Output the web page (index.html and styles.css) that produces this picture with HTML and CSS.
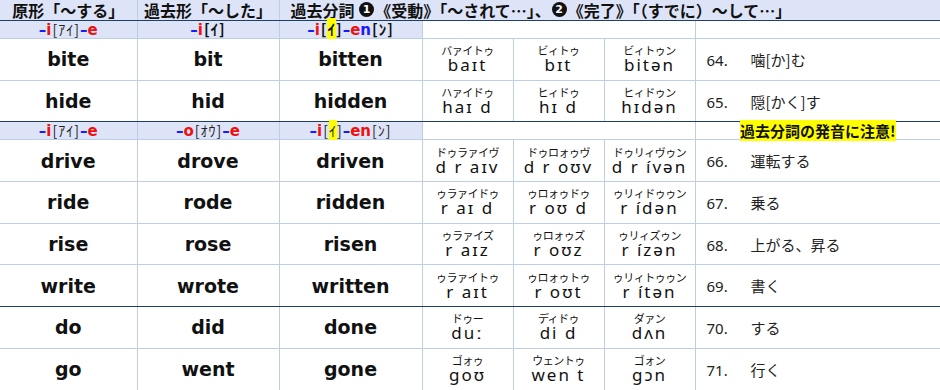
FILE: index.html
```html
<!DOCTYPE html>
<html lang="ja">
<head>
    <meta charset="UTF-8">
    <title>不規則動詞 i-e 型</title>
    <link rel="stylesheet" href="styles.css">
</head>
<body>
    <table class="verbs">
        <colgroup>
            <col class="c-word"><col class="c-word2"><col class="c-word3">
            <col class="c-pron"><col class="c-pron"><col class="c-pron">
            <col class="c-mean">
        </colgroup>
        <tr class="head">
            <td class="center">原形「〜する」</td>
            <td class="center">過去形「〜した」</td>
            <td colspan="5" class="head-long">過去分詞 <span class="circ">1</span>《受動》「〜されて…」、<span class="circ">2</span>《完了》「（すでに）〜して…」</td>
        </tr>
        <tr class="sub">
            <td><span class="bl">–</span><span class="rd">i</span><span class="kk">[ｱｲ]</span><span class="bl">–</span><span class="rd">e</span></td>
            <td><span class="bl">–</span><span class="rd">i</span><span class="kb">[ｲ]</span></td>
            <td><span class="bl">–</span><span class="rd">i</span><span class="kb">[<span class="hl">ｲ</span>]</span><span class="bl">–</span><span class="rd">e</span><span class="bl">n</span><span class="kb">[ﾝ]</span></td>
            <td colspan="3" class="blank"></td>
            <td class="blank"></td>
        </tr>
        <tr class="row">
            <td class="word">bite</td><td class="word">bit</td><td class="word">bitten</td>
            <td class="pron"><div class="kana">バァイトゥ</div><div class="ipa">baɪt</div></td>
            <td class="pron"><div class="kana">ビィトゥ</div><div class="ipa">bɪt</div></td>
            <td class="pron"><div class="kana">ビィトゥン</div><div class="ipa">bitən</div></td>
            <td class="mean"><span class="num">64.</span>噛[か]む</td>
        </tr>
        <tr class="row last">
            <td class="word">hide</td><td class="word">hid</td><td class="word">hidden</td>
            <td class="pron"><div class="kana">ハァイドゥ</div><div class="ipa">haɪ d</div></td>
            <td class="pron"><div class="kana">ヒィドゥ</div><div class="ipa">hɪ d</div></td>
            <td class="pron"><div class="kana">ヒィドゥン</div><div class="ipa">hɪdən</div></td>
            <td class="mean"><span class="num">65.</span>隠[かく]す</td>
        </tr>
        <tr class="sub">
            <td><span class="bl">–</span><span class="rd">i</span><span class="kk">[ｱｲ]</span><span class="bl">–</span><span class="rd">e</span></td>
            <td><span class="bl">–</span><span class="rd">o</span><span class="kk">[ｵｳ]</span><span class="bl">–</span><span class="rd">e</span></td>
            <td><span class="bl">–</span><span class="rd">i</span><span class="kk">[<span class="hl">ｲ</span>]</span><span class="bl">–</span><span class="rd">en</span><span class="kk">[ﾝ]</span></td>
            <td colspan="3" class="blank"></td>
            <td class="note"><span class="hl">過去分詞の発音に注意!</span></td>
        </tr>
        <tr class="row">
            <td class="word">drive</td><td class="word">drove</td><td class="word">driven</td>
            <td class="pron"><div class="kana">ドゥラァイヴ</div><div class="ipa">d r aɪv</div></td>
            <td class="pron"><div class="kana">ドゥロォゥヴ</div><div class="ipa">d r oʊv</div></td>
            <td class="pron"><div class="kana">ドゥリィヴゥン</div><div class="ipa">d r ívən</div></td>
            <td class="mean"><span class="num">66.</span>運転する</td>
        </tr>
        <tr class="row">
            <td class="word">ride</td><td class="word">rode</td><td class="word">ridden</td>
            <td class="pron"><div class="kana">ゥラァイドゥ</div><div class="ipa">r aɪ d</div></td>
            <td class="pron"><div class="kana">ゥロォゥドゥ</div><div class="ipa">r oʊ d</div></td>
            <td class="pron"><div class="kana">ゥリィドゥゥン</div><div class="ipa">r ídən</div></td>
            <td class="mean"><span class="num">67.</span>乗る</td>
        </tr>
        <tr class="row">
            <td class="word">rise</td><td class="word">rose</td><td class="word">risen</td>
            <td class="pron"><div class="kana">ゥラァイズ</div><div class="ipa">r aɪz</div></td>
            <td class="pron"><div class="kana">ゥロォゥズ</div><div class="ipa">r oʊz</div></td>
            <td class="pron"><div class="kana">ゥリィズゥン</div><div class="ipa">r ízən</div></td>
            <td class="mean"><span class="num">68.</span>上がる、昇る</td>
        </tr>
        <tr class="row last">
            <td class="word">write</td><td class="word">wrote</td><td class="word">written</td>
            <td class="pron"><div class="kana">ゥラァイトゥ</div><div class="ipa">r aɪt</div></td>
            <td class="pron"><div class="kana">ゥロォゥトゥ</div><div class="ipa">r oʊt</div></td>
            <td class="pron"><div class="kana">ゥリィトゥゥン</div><div class="ipa">r ítən</div></td>
            <td class="mean"><span class="num">69.</span>書く</td>
        </tr>
        <tr class="row">
            <td class="word">do</td><td class="word">did</td><td class="word">done</td>
            <td class="pron"><div class="kana">ドゥー</div><div class="ipa">duː</div></td>
            <td class="pron"><div class="kana">ディドゥ</div><div class="ipa">di d</div></td>
            <td class="pron"><div class="kana">ダァン</div><div class="ipa">dʌn</div></td>
            <td class="mean"><span class="num">70.</span>する</td>
        </tr>
        <tr class="row last">
            <td class="word">go</td><td class="word">went</td><td class="word">gone</td>
            <td class="pron"><div class="kana">ゴォゥ</div><div class="ipa">goʊ</div></td>
            <td class="pron"><div class="kana">ウェントゥ</div><div class="ipa">wen t</div></td>
            <td class="pron"><div class="kana">ゴォン</div><div class="ipa">gɔn</div></td>
            <td class="mean"><span class="num">71.</span>行く</td>
        </tr>
    </table>
</body>
</html>
```

FILE: styles.css
```css
body {
    margin: 0;
    background: #fff;
    font-family: "Noto Sans CJK JP", sans-serif;
    color: #111;
}
.verbs {
    width: 940px;
    border-collapse: collapse;
    table-layout: fixed;
}
.c-word { width: 137px; }
.c-word2 { width: 142px; }
.c-word3 { width: 143px; }
.c-pron { width: 91px; }
.c-mean { width: 245px; }
.verbs td {
    padding: 0;
    border: 1px solid #bccfe6;
    white-space: nowrap;
}
.verbs td:first-child {
    border-left: none;
}
.verbs td:last-child {
    border-right: none;
}
.head td {
    height: 20px;
    background: #dde4f7;
    font-weight: 700;
    font-size: 16px;
    line-height: 20px;
    border-top: none;
    border-bottom: 1px solid #1f3f66;
}
.center {
    text-align: center;
}
.head-long {
    padding-left: 11px !important;
}
.circ {
    display: inline-block;
    width: 15px;
    height: 15px;
    margin: 2px 1px 0;
    border-radius: 50%;
    background: #111;
    color: #fff;
    font-family: "DejaVu Sans", sans-serif;
    font-size: 11px;
    font-weight: 700;
    line-height: 15px;
    text-align: center;
    vertical-align: top;
}
.sub td {
    height: 16px;
    background: #dde4f7;
    text-align: center;
    font-weight: 700;
    font-size: 15px;
    line-height: 16px;
    font-family: "DejaVu Sans", "Noto Sans CJK JP", sans-serif;
}
.sub td.blank, .sub td.note {
    background: #fff;
}
.bl {
    color: #1a1aff;
}
.rd {
    color: #f01010;
}
.kk {
    font-family: "Noto Sans CJK JP", sans-serif;
    font-weight: 400;
    font-size: 14px;
    letter-spacing: 1px;
    padding-left: 1px;
    color: #222;
}
.kb {
    font-family: "Noto Sans CJK JP", sans-serif;
    font-weight: 700;
    font-size: 15px;
    letter-spacing: 1px;
    padding-left: 1px;
    color: #111;
}
.hl {
    background: #ffff00;
}
.note {
    font-family: "Noto Sans CJK JP", sans-serif !important;
    font-size: 15px !important;
    color: #111;
}
.row td {
    height: 40.7px;
}
.row.last td {
    border-bottom: 1px solid #1f3f66;
}
.word {
    text-align: center;
    font-family: "DejaVu Sans", sans-serif;
    font-weight: 700;
    font-size: 19px;
    color: #111;
}
.pron {
    text-align: center;
}
.kana {
    font-size: 11px;
    line-height: 12px;
    letter-spacing: -0.5px;
    color: #111;
}
.ipa {
    font-family: "Noto Sans", "DejaVu Sans", sans-serif;
    font-size: 17px;
    line-height: 18px;
    letter-spacing: 2px;
    color: #111;
}
.mean {
    padding-left: 11px !important;
    font-size: 15px;
    color: #222;
}
.num {
    display: inline-block;
    width: 44px;
    font-family: "Noto Sans", sans-serif;
}
```
